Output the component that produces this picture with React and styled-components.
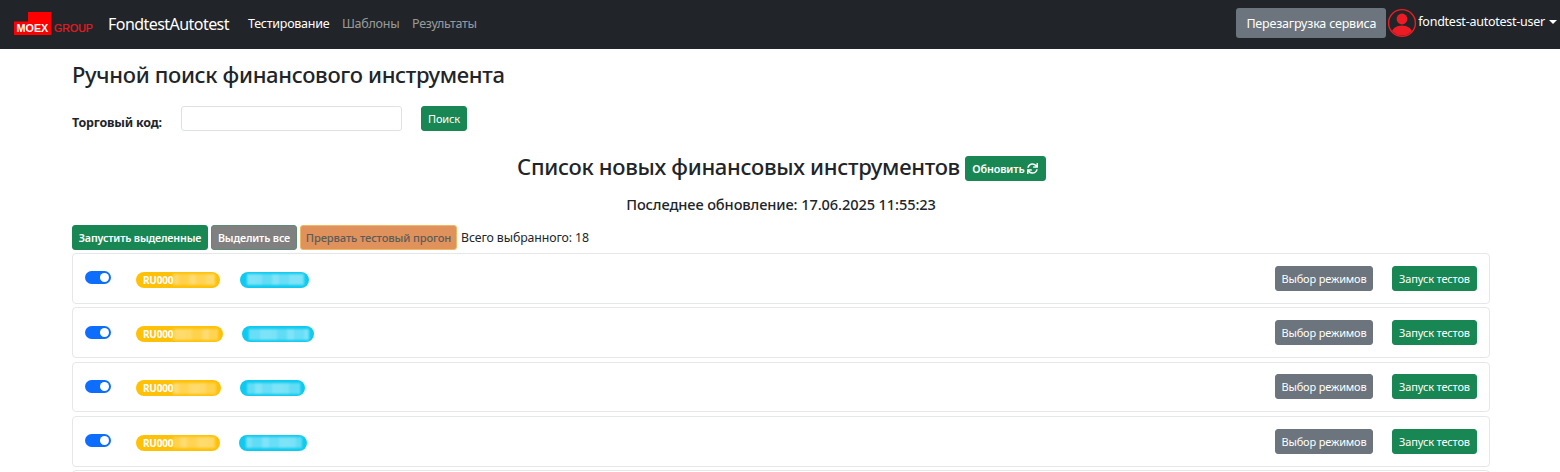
import React from 'react';
import styled, { createGlobalStyle } from 'styled-components';
import { FaSync } from 'react-icons/fa';

const GlobalStyle = createGlobalStyle`
  html, body {
    margin: 0;
    height: 100%;
    overflow: hidden;
    background: #fff;
  }
  body {
    font-family: "Noto Sans", "Open Sans", sans-serif;
    color: #212529;
    font-size: 13px;
  }
  * { box-sizing: border-box; }
`;

const Navbar = styled.nav`
  height: 49px;
  background: #212529;
  display: flex;
  align-items: center;
  padding: 0 3px 3px 14px;
`;

const Brand = styled.span`
  color: #fff;
  font-size: 16px;
  margin-left: 14px;
  letter-spacing: -0.55px;
  margin-top: 1px;
`;

const NavLinks = styled.div`
  display: flex;
  gap: 12.5px;
  margin-left: 19px;
`;

const NavLink = styled.a`
  font-size: 12.5px;
  letter-spacing: -0.25px;
  color: ${(p) => (p.$active ? '#fff' : 'rgba(255,255,255,.55)')};
`;

const NavRight = styled.div`
  margin-left: auto;
  display: flex;
  align-items: center;
`;

const ReloadButton = styled.button`
  width: 150px;
  height: 30px;
  background: #6c757d;
  border: 0;
  border-radius: 3px;
  color: #fff;
  font: inherit;
  font-size: 12.5px;
  letter-spacing: -0.2px;
  padding: 0;
`;

const UserName = styled.span`
  color: #fff;
  font-size: 12.5px;
  letter-spacing: -0.25px;
  margin-left: 1px;
  margin-top: -3px;
`;

const Caret = styled.i`
  display: inline-block;
  margin: -3px 0 0 4px;
  border-top: 4px solid #fff;
  border-left: 4px solid transparent;
  border-right: 4px solid transparent;
`;

const Main = styled.main`
  padding: 0 70px 0 72px;
`;

const PageTitle = styled.h1`
  font-size: 22px;
  font-weight: 500;
  line-height: 30px;
  margin: 0;
  padding-top: 10px;
  letter-spacing: -0.33px;
`;

const SearchRow = styled.div`
  display: flex;
  align-items: center;
  margin-top: 17px;
`;

const SearchLabel = styled.label`
  font-weight: 700;
  font-size: 12.5px;
  letter-spacing: -0.2px;
  width: 109px;
  padding-top: 8px;
`;

const SearchInput = styled.input`
  width: 221px;
  height: 25px;
  border: 1px solid #dee2e6;
  border-radius: 3px;
  background: #fff;
`;

const Button = styled.button`
  height: ${(p) => p.$h || 25}px;
  width: ${(p) => p.$w}px;
  padding: 0;
  border: 1px solid ${(p) => p.$border || p.$bg};
  border-radius: 3px;
  background: ${(p) => p.$bg};
  color: ${(p) => p.$color || '#fff'};
  font-family: inherit;
  font-size: ${(p) => p.$size || 11}px;
  font-weight: ${(p) => p.$weight || 400};
  letter-spacing: -0.15px;
  display: inline-flex;
  align-items: center;
  justify-content: center;
  gap: 3px;
  white-space: nowrap;
`;

const SearchButton = styled(Button)`
  margin-left: 19px;
`;

const ListHeading = styled.div`
  display: flex;
  justify-content: center;
  align-items: center;
  gap: 5px;
  margin-top: 24px;
  height: 27px;
  padding-left: 1px;
`;

const ListTitle = styled.h2`
  margin: 0 0 6px;
  font-size: 22px;
  font-weight: 500;
  letter-spacing: -0.3px;
`;

const Updated = styled.div`
  text-align: center;
  font-size: 14.6px;
  font-weight: 500;
  line-height: 20px;
  margin-top: 12px;
  letter-spacing: -0.1px;
`;

const Actions = styled.div`
  display: flex;
  align-items: center;
  gap: 3px;
  margin-top: 11px;
`;

const Total = styled.span`
  font-size: 12.3px;
  margin: -1px 0 0 1px;
  letter-spacing: -0.1px;
`;

const List = styled.div`
  margin-top: 3px;
  display: flex;
  flex-direction: column;
  gap: 3.6px;
`;

const Card = styled.div`
  height: 50.7px;
  border: 1px solid #e6e7e9;
  border-radius: 4px;
  display: flex;
  align-items: center;
  padding: 0 12px 0 12px;
  flex-shrink: 0;
`;

const Switch = styled.span`
  width: 26px;
  height: 13px;
  border-radius: 7px;
  background: #0d6efd;
  display: flex;
  justify-content: flex-end;
  align-items: center;
  padding-right: 2px;
  margin-top: -1px;
  flex-shrink: 0;

  &::after {
    content: '';
    width: 9px;
    height: 9px;
    border-radius: 50%;
    background: #fff;
  }
`;

const Pill = styled.span`
  height: 16px;
  border-radius: 8px;
  background: ${(p) => p.$bg};
  width: ${(p) => p.$w}px;
  margin-left: ${(p) => p.$gap}px;
  margin-top: 3px;
  display: flex;
  align-items: center;
  padding: 0 5px 0 7px;
  color: #fff;
  font-size: 10px;
  font-weight: 700;
  letter-spacing: -0.2px;
  line-height: 1;
  flex-shrink: 0;
`;

// pixelated blur over the hidden part of a code
const Smudge = styled.span`
  flex: 1;
  height: 11px;
  background-color: rgba(255, 255, 255, ${(p) => p.$alpha});
  background-image: linear-gradient(
    90deg,
    rgba(255, 255, 255, 0.15) 0 14%,
    rgba(255, 255, 255, 0) 14% 37%,
    rgba(255, 255, 255, 0.2) 37% 52%,
    rgba(255, 255, 255, 0.05) 52% 74%,
    rgba(255, 255, 255, 0.18) 74% 100%
  );
  background-size: 44px 100%;
  background-position: ${(p) => p.$shift}px 0;
  filter: blur(1px);
`;

const RowActions = styled.div`
  margin-left: auto;
  display: flex;
  gap: 19px;
`;

const Avatar = () => (
  <svg width="30" height="30" viewBox="0 0 30 30" style={{ marginLeft: 1 }}>
    <defs>
      <clipPath id="ava"><circle cx="15" cy="15" r="12.6" /></clipPath>
    </defs>
    <circle cx="15" cy="15" r="13.4" fill="none" stroke="#ed1c24" strokeWidth="1.4" />
    <g clipPath="url(#ava)" fill="#ed1c24">
      <circle cx="15" cy="11" r="5.4" />
      <ellipse cx="15" cy="25" rx="10.5" ry="7.5" />
    </g>
  </svg>
);

const Logo = () => (
  <svg width="80" height="23" viewBox="0 0 80 23">
    <path d="M0 9.5h14V0h23v23H0z" fill="#ff0000" />
    <text x="2.5" y="19.8" fill="#fff" fontFamily="Liberation Sans" fontWeight="700" fontSize="10.8">MOEX</text>
    <text x="40" y="19.8" fill="#f01820" stroke="#f01820" strokeWidth="0.2" fontFamily="Liberation Sans" fontSize="10.6">GROUP</text>
  </svg>
);

const rows = [
  { y: 84, b: 69, gap: 20, shift: 0 },
  { y: 87, b: 72, gap: 19, shift: 13 },
  { y: 85, b: 65, gap: 19, shift: 27 },
  { y: 84, b: 68, gap: 19, shift: 35 },
];

export default function App() {
  return (
    <>
      <GlobalStyle />
      <Navbar>
        <Logo />
        <Brand>FondtestAutotest</Brand>
        <NavLinks>
          <NavLink $active>Тестирование</NavLink>
          <NavLink>Шаблоны</NavLink>
          <NavLink>Результаты</NavLink>
        </NavLinks>
        <NavRight>
          <ReloadButton>Перезагрузка сервиса</ReloadButton>
          <Avatar />
          <UserName>fondtest-autotest-user</UserName>
          <Caret />
        </NavRight>
      </Navbar>
      <Main>
        <PageTitle>Ручной поиск финансового инструмента</PageTitle>
        <SearchRow>
          <SearchLabel>Торговый код:</SearchLabel>
          <SearchInput />
          <SearchButton $bg="#198754" $w={46}>Поиск</SearchButton>
        </SearchRow>
        <ListHeading>
          <ListTitle>Список новых финансовых инструментов</ListTitle>
          <Button $bg="#198754" $w={81} $size={10.8} $weight={600}>Обновить <FaSync size={11} /></Button>
        </ListHeading>
        <Updated>Последнее обновление: 17.06.2025 11:55:23</Updated>
        <Actions>
          <Button $bg="#198754" $w={136} $size={10.7} $weight={600}>Запустить выделенные</Button>
          <Button $bg="#808080" $border="#5e8a76" $w={86} $size={10.7} $weight={600}>Выделить все</Button>
          <Button $bg="#e0925c" $border="#f0b860" $color="#5c5c58" $w={157} $size={11.2} $weight={500}>Прервать тестовый прогон</Button>
          <Total>Всего выбранного: 18</Total>
        </Actions>
        <List>
          {rows.map((r, i) => (
            <Card key={i}>
              <Switch />
              <Pill $bg="#ffc107" $w={r.y} $gap={25}>RU000<Smudge $alpha={0.28} $shift={r.shift} /></Pill>
              <Pill $bg="#0dcaf0" $w={r.b} $gap={r.gap}><Smudge $alpha={0.35} $shift={r.shift + 9} /></Pill>
              <RowActions>
                <Button $bg="#6c757d" $w={98}>Выбор режимов</Button>
                <Button $bg="#198754" $w={85}>Запуск тестов</Button>
              </RowActions>
            </Card>
          ))}
          <Card />
        </List>
      </Main>
    </>
  );
}
